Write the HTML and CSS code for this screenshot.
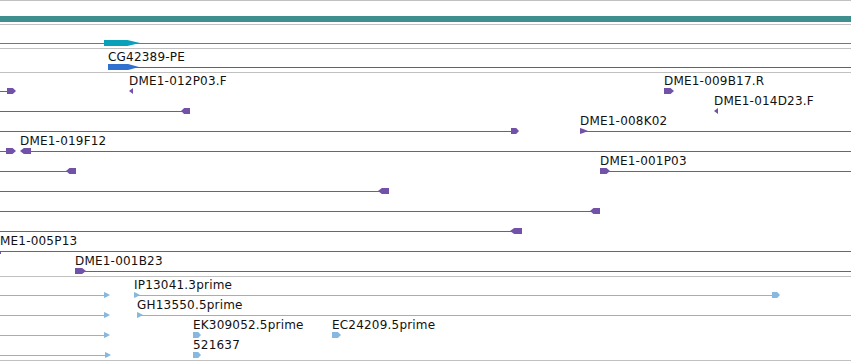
FILE: index.html
```html
<!DOCTYPE html>
<html lang="en">
  <head>
    <meta charset="UTF-8" />
    <title>Genome tracks</title>
    <link rel="stylesheet" href="styles.css">
  </head>
  <body>
    <div class="browser">
      <!-- reference sequence -->
      <div class="track t-ref">
        <div class="refbar"></div>
      </div>

      <!-- gene -->
      <div class="track t-row">
        <div class="ln teal" style="left:0;top:18px;width:851px"></div>
        <div class="blk fw teal-b" style="left:104px;top:15px;width:36px"></div>
      </div>

      <!-- mRNA -->
      <div class="track t-row">
        <div class="lbl" style="left:108px;top:2px">CG42389-PE</div>
        <div class="ln blue" style="left:108px;top:18px;width:743px"></div>
        <div class="blk fw blue-b" style="left:108px;top:15px;width:31px"></div>
      </div>

      <!-- BAC ends -->
      <div class="track t-bac">
        <!-- lane 0 -->
        <div class="ln purple" style="left:0;top:18px;width:10px"></div>
        <div class="blk fw purple-b" style="left:7px;top:15px;width:9px"></div>
        <div class="lbl" style="left:129px;top:2px">DME1-012P03.F</div>
        <div class="blk tip-rv purple-b" style="left:129px;top:15px;width:4px"></div>
        <div class="lbl" style="left:664px;top:2px">DME1-009B17.R</div>
        <div class="blk fw purple-b" style="left:664px;top:15px;width:10px"></div>

        <!-- lane 1 -->
        <div class="ln purple" style="left:0;top:38px;width:184px"></div>
        <div class="blk rv purple-b" style="left:181px;top:35px;width:9px"></div>
        <div class="lbl" style="left:714px;top:22px">DME1-014D23.F</div>
        <div class="blk tip-rv purple-b" style="left:714px;top:35px;width:4px"></div>

        <!-- lane 2 -->
        <div class="ln purple" style="left:0;top:58px;width:512px"></div>
        <div class="blk fw purple-b" style="left:511px;top:55px;width:8px"></div>
        <div class="lbl" style="left:580px;top:42px">DME1-008K02</div>
        <div class="blk tip-fw purple-b" style="left:580px;top:55px;width:8px"></div>
        <div class="ln purple" style="left:586px;top:58px;width:265px"></div>

        <!-- lane 3 -->
        <div class="ln purple" style="left:0;top:78px;width:8px"></div>
        <div class="blk fw purple-b" style="left:6px;top:75px;width:10px"></div>
        <div class="lbl" style="left:20px;top:62px">DME1-019F12</div>
        <div class="blk rv purple-b" style="left:20px;top:75px;width:11px"></div>
        <div class="ln purple" style="left:30px;top:78px;width:821px"></div>

        <!-- lane 4 -->
        <div class="ln purple" style="left:0;top:98px;width:68px"></div>
        <div class="blk rv purple-b" style="left:66px;top:95px;width:10px"></div>
        <div class="lbl" style="left:600px;top:82px">DME1-001P03</div>
        <div class="blk fw purple-b" style="left:600px;top:95px;width:10px"></div>
        <div class="ln purple" style="left:608px;top:98px;width:243px"></div>

        <!-- lane 5 -->
        <div class="ln purple" style="left:0;top:118px;width:380px"></div>
        <div class="blk rv purple-b" style="left:378px;top:115px;width:11px"></div>

        <!-- lane 6 -->
        <div class="ln purple" style="left:0;top:138px;width:592px"></div>
        <div class="blk rv purple-b" style="left:590px;top:135px;width:10px"></div>

        <!-- lane 7 -->
        <div class="ln purple" style="left:0;top:158px;width:512px"></div>
        <div class="blk rv purple-b" style="left:510px;top:155px;width:12px"></div>

        <!-- lane 8 (label starts off screen) -->
        <div class="lbl" style="left:0;top:162px">ME1-005P13</div>
        <div class="ln purple" style="left:0;top:178px;width:851px"></div>
        <div class="tick purple-b" style="left:0;top:178px"></div>

        <!-- lane 9 -->
        <div class="lbl" style="left:75px;top:182px">DME1-001B23</div>
        <div class="blk fw purple-b" style="left:75px;top:195px;width:11px"></div>
        <div class="ln purple" style="left:84px;top:198px;width:767px"></div>
      </div>

      <!-- ESTs -->
      <div class="track t-est">
        <!-- lane 0 -->
        <div class="ln lblue" style="left:0;top:18px;width:106px"></div>
        <div class="blk tip-fw lblue-b" style="left:104px;top:15px;width:6px"></div>
        <div class="lbl" style="left:134px;top:2px">IP13041.3prime</div>
        <div class="blk tip-fw lblue-b" style="left:134px;top:15px;width:6px"></div>
        <div class="ln lblue" style="left:136px;top:18px;width:638px"></div>
        <div class="blk fw lblue-b" style="left:772px;top:15px;width:8px"></div>

        <!-- lane 1 -->
        <div class="ln lblue" style="left:0;top:38px;width:106px"></div>
        <div class="blk tip-fw lblue-b" style="left:104px;top:35px;width:6px"></div>
        <div class="lbl" style="left:137px;top:22px">GH13550.5prime</div>
        <div class="blk tip-fw lblue-b" style="left:137px;top:35px;width:6px"></div>
        <div class="ln lblue" style="left:139px;top:38px;width:712px"></div>

        <!-- lane 2 -->
        <div class="ln lblue" style="left:0;top:58px;width:106px"></div>
        <div class="blk tip-fw lblue-b" style="left:104px;top:55px;width:6px"></div>
        <div class="lbl" style="left:193px;top:42px">EK309052.5prime</div>
        <div class="blk fw lblue-b" style="left:193px;top:55px;width:8px"></div>
        <div class="lbl" style="left:332px;top:42px">EC24209.5prime</div>
        <div class="blk fw lblue-b" style="left:332px;top:55px;width:9px"></div>

        <!-- lane 3 -->
        <div class="ln lblue" style="left:0;top:78px;width:107px"></div>
        <div class="blk tip-fw lblue-b" style="left:105px;top:75px;width:6px"></div>
        <div class="lbl" style="left:193px;top:62px">521637</div>
        <div class="blk fw lblue-b" style="left:193px;top:75px;width:8px"></div>
      </div>
    </div>
  </body>
</html>
```

FILE: styles.css
```css
body {
  margin: 0;
  background-color: #fff;
  font-family: "DejaVu Sans", sans-serif;
  font-size: 12px;
  overflow: hidden;
}

.browser {
  width: 851px;
}

.track {
  position: relative;
  border-top: 1px solid #c0c0c0;
  overflow: hidden;
}

.t-ref,
.t-row {
  height: 23px;
}

.t-bac {
  height: 203px;
}

.t-est {
  height: 83px;
  border-bottom: 1px solid #c0c0c0;
}

.refbar {
  margin-top: 15px;
  height: 6px;
  background-color: #408f8f;
}

.lbl {
  position: absolute;
  line-height: 12px;
  white-space: nowrap;
  letter-spacing: 0.2px;
  color: #111;
}

.ln {
  position: absolute;
  height: 1px;
}

.blk {
  position: absolute;
  height: 6px;
}

.tick {
  position: absolute;
  width: 1px;
  height: 3px;
}

.fw {
  clip-path: polygon(0 0, 65% 0, 100% 50%, 65% 100%, 0 100%);
}

.rv {
  clip-path: polygon(35% 0, 100% 0, 100% 100%, 35% 100%, 0 50%);
}

.tip-fw {
  clip-path: polygon(0 0, 40% 15%, 100% 50%, 40% 85%, 0 100%);
}

.tip-rv {
  clip-path: polygon(100% 0, 100% 100%, 0 50%);
}

.teal { background-color: #1d98b0; }
.teal-b { background-color: #0aa0ba; }
.blue { background-color: #3b67b6; }
.blue-b { background-color: #3070cf; }
.purple { background-color: #7257a6; }
.purple-b { background-color: #7152a8; }
.lblue { background-color: #87b5dc; }
.lblue-b { background-color: #86b8e0; }
```
